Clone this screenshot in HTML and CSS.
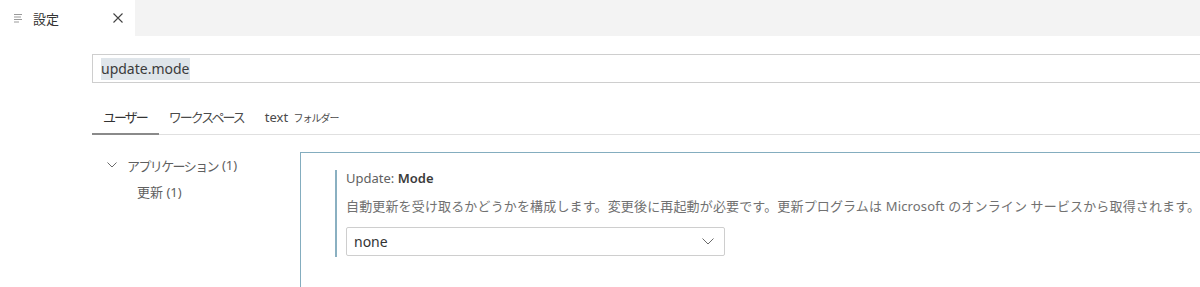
FILE: index.html
```html
<!DOCTYPE html>
<html lang="ja">

<head>
    <meta charset="utf-8">
    <title>設定</title>
    <link rel="stylesheet" href="styles.css">
</head>

<body>
    <div class="tabbar">
        <div class="tab">
            <svg class="tab-icon" width="10" height="10" viewBox="0 0 10 10">
                <path d="M1 1.5h8M1 4h7M1 6.5h8M1 9h5" stroke="#9a9a9a" stroke-width="1" fill="none" />
            </svg>
            <span class="tab-title">設定</span>
            <svg class="tab-close" width="12" height="12" viewBox="0 0 12 12">
                <path d="M1.5 1.5l9 9M10.5 1.5l-9 9" stroke="#424242" stroke-width="1.1" fill="none" />
            </svg>
        </div>
        <div class="tabbar-rest"></div>
    </div>

    <div class="editor">
        <div class="search">
            <span class="search-text">update.mode</span>
        </div>

        <div class="scopes">
            <div class="scope active"><span class="jp">ユーザー</span></div>
            <div class="scope"><span class="jp">ワークスペース</span></div>
            <div class="scope">text <span class="scope-small">フォルダー</span></div>
        </div>

        <div class="body">
            <div class="toc">
                <div class="toc-row">
                    <svg class="toc-chevron" width="10" height="6" viewBox="0 0 10 6">
                        <path d="M0.5 0.5l4.5 4.5 4.5-4.5" stroke="#6a6a6a" stroke-width="1" fill="none" />
                    </svg>
                    <span class="jp">アプリケーション</span>(1)
                </div>
                <div class="toc-row child">更新&nbsp;(1)</div>
            </div>

            <div class="card">
                <div class="setting">
                    <div class="setting-title">Update: <b>Mode</b></div>
                    <div class="setting-desc">自動更新を受け取るかどうかを構成します。変更後に再起動が必要です。更新プログラムは Microsoft のオンライン サービスから取得されます。</div>
                    <div class="select">
                        <span>none</span>
                        <svg width="12" height="7" viewBox="0 0 12 7">
                            <path d="M0.5 0.5l5.5 5.5 5.5-5.5" stroke="#6a6a6a" stroke-width="1" fill="none" />
                        </svg>
                    </div>
                </div>
            </div>
        </div>
    </div>
</body>

</html>
```

FILE: styles.css
```css
html,
body {
    height: 100%;
    padding: 0;
    margin: 0;
}

body {
    font-family: "Noto Sans", "Noto Sans CJK JP", sans-serif;
    font-size: 13px;
    color: #333;
    background: #fff;
    overflow: hidden;
    width: 1200px;
}

.tabbar {
    display: flex;
    height: 36px;
}

.tab {
    width: 135px;
    display: flex;
    align-items: center;
    background: #fff;
}

.tab-icon {
    margin-left: 13px;
}

.tab-title {
    margin-left: 10px;
    font-size: 13px;
    color: #333;
}

.tab-close {
    margin-left: auto;
    margin-right: 11px;
}

.tabbar-rest {
    flex: 1;
    background: #f3f3f3;
}

.editor {
    padding-left: 92px;
}

/* 搜索框右侧超出窗口 */
.search {
    margin-top: 18px;
    width: 1200px;
    height: 27px;
    border: 1px solid #cecece;
    display: flex;
    align-items: center;
    padding-left: 8px;
}

.search-text {
    font-size: 14px;
    line-height: 22px;
    background: #dfe5ea;
    color: #3b3b3b;
}

.scopes {
    display: flex;
    margin-top: 18px;
    border-bottom: 1px solid #e0e0e0;
}

.scope {
    padding: 6px 10px 0;
    height: 26px;
    line-height: 20px;
    color: #4a4a4a;
    margin-bottom: -1px;
}

/* 日文字体比原图宽，用字距收窄 */
.jp {
    letter-spacing: -1.6px;
    margin-right: 4px;
}

.scope .jp {
    letter-spacing: -2px;
    margin-right: 1px;
}

.scope.active {
    padding: 6px 11px 0;
    border-bottom: 2px solid #8a8a8a;
    color: #333;
}

.scope-small {
    font-size: 10px;
    margin-left: 2px;
    letter-spacing: -1px;
}

.body {
    display: flex;
    margin-top: 17px;
}

.toc {
    width: 208px;
    flex-shrink: 0;
}

.toc-row {
    display: flex;
    align-items: center;
    height: 26px;
    padding-left: 15px;
    color: #5f5f5f;
}

.toc-chevron {
    margin-right: 10px;
}

.toc-row.child {
    padding-left: 45px;
}

.card {
    width: 920px;
    flex-shrink: 0;
    min-height: 150px;
    border: 1px solid #84adbf;
    border-right: none;
    padding: 17px 0 0 34px;
}

.setting {
    border-left: 2px solid #8ab0c1;
    padding-left: 9px;
    padding-bottom: 1px;
}

.setting-title {
    line-height: 16px;
    font-size: 13px;
    color: #616161;
}

.setting-title b {
    color: #3b3b3b;
    font-weight: 600;
}

.setting-desc {
    margin-top: 10px;
    line-height: 20px;
    color: #717171;
    white-space: nowrap;
    letter-spacing: 0.15px;
}

.select {
    margin-top: 11px;
    width: 360px;
    height: 27px;
    border: 1px solid #cecece;
    border-radius: 2px;
    display: flex;
    align-items: center;
    justify-content: space-between;
    padding: 0 10px 0 7px;
    font-size: 14px;
    color: #333;
}
```
